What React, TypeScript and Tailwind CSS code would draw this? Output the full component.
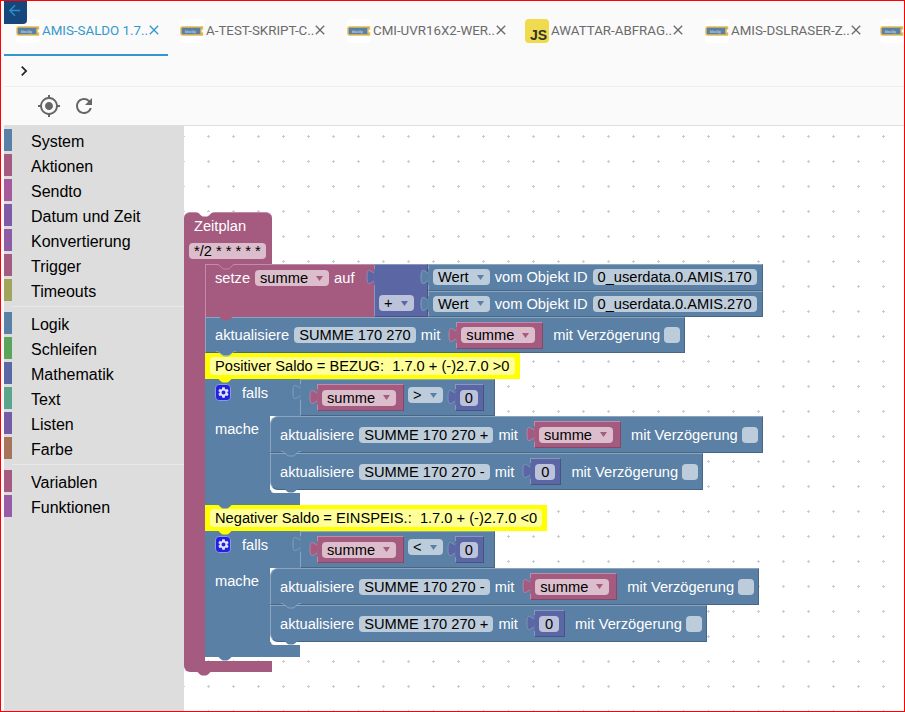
import type { ReactNode } from "react";
import { MdArrowBack, MdChevronRight, MdClose, MdGpsFixed, MdRefresh, MdSettings } from "react-icons/md";

const tones = {
  blue: { box: "bg-[#5b80a5] border-t-[#8ca6c0] border-l-[#8ca6c0] border-b-[#496684] border-r-[#496684]", hex: "#5b80a5", light: "#8ca6c0" },
  pink: { box: "bg-[#a55b80] border-t-[#c08ca6] border-l-[#c08ca6] border-b-[#844966] border-r-[#844966]", hex: "#a55b80", light: "#c08ca6" },
  math: { box: "bg-[#5b67a5] border-t-[#8c95c0] border-l-[#8c95c0] border-b-[#495284] border-r-[#495284]", hex: "#5b67a5", light: "#8c95c0" },
};
type Tone = keyof typeof tones;

const categories = [
  [["System", "bg-[#5b80a5]"], ["Aktionen", "bg-[#a55b80]"], ["Sendto", "bg-[#a55b99]"], ["Datum und Zeit", "bg-[#805ba5]"], ["Konvertierung", "bg-[#8e5ba5]"], ["Trigger", "bg-[#a55b80]"], ["Timeouts", "bg-[#a0a55b]"]],
  [["Logik", "bg-[#5b80a5]"], ["Schleifen", "bg-[#5ba55b]"], ["Mathematik", "bg-[#5b67a5]"], ["Text", "bg-[#5ba58c]"], ["Listen", "bg-[#745ba5]"], ["Farbe", "bg-[#a5745b]"]],
  [["Variablen", "bg-[#a55b80]"], ["Funktionen", "bg-[#995ba5]"]],
];

const tabs = [
  { label: "AMIS-SALDO 1.7..", width: "w-[164px]", active: true },
  { label: "A-TEST-SKRIPT-C..", width: "w-[167px]" },
  { label: "CMI-UVR16X2-WER..", width: "w-[178px]" },
  { label: "AWATTAR-ABFRAG..", width: "w-[180px]", js: true },
  { label: "AMIS-DSLRASER-Z..", width: "w-[175px]" },
];

function BlocklyIcon() {
  return (
    <span className="flex h-6 w-6 shrink-0 items-center justify-center rounded bg-white">
      <svg width="24" height="10" viewBox="0 0 24 10">
        <path d="M2.5 1h20v2h-1.5v4h1.5v2h-20c-1 0-1.5-1-1.5-1.5v-5c0-.5.5-1.5 1.5-1.5z" fill="#5b80a5" stroke="#e3bc55" strokeWidth="1.5" />
        <text x="5" y="6.5" fontSize="3.5" fill="#dfe6ee">blockly</text>
      </svg>
    </span>
  );
}

function Tab({ label, width, active, js }: { label: string; width: string; active?: boolean; js?: boolean }) {
  const color = active ? "text-[#3399cc]" : "text-[#6b6b6b]";
  return (
    <div className={`relative flex h-[55px] shrink-0 items-start pl-3 pt-[18px] ${width}`}>
      {js ? (
        <span className="flex h-6 w-6 shrink-0 items-end justify-end rounded bg-[#f0db4f] pr-[2px] text-[14px] font-bold leading-[15px] text-[#323330]">JS</span>
      ) : (
        <BlocklyIcon />
      )}
      <span className={`ml-[2px] whitespace-nowrap text-[13.33px] leading-6 [font-family:Roboto,sans-serif] ${color}`}>{label}</span>
      <MdClose className={`-ml-[2px] mt-[3px] shrink-0 ${color}`} size={16} />
      {active && <div className="absolute bottom-0 left-0 h-[2px] w-full bg-[#3399cc]" />}
    </div>
  );
}

function Notch({ color, stroke, left = 10 }: { color: string; stroke?: string; left?: number }) {
  return (
    <svg className="absolute top-full z-10 -mt-[1px]" style={{ left }} width="20" height="6" viewBox="0 0 20 6">
      <path d="M0 0c2 0 3 .5 4 1.5l1.5 1.5c.8.8 2 1.5 3 1.5h3c1 0 2.2-.7 3-1.5l1.5-1.5c1-1 2-1.5 4-1.5z" fill={color} />
      {stroke && <path d="M0 .5c2 0 3 .5 4 1.5l1.5 1.5c.8.8 2 1.5 3 1.5h3c1 0 2.2-.7 3-1.5l1.5-1.5c1-1 2-1.5 4-1.5" fill="none" stroke={stroke} strokeWidth="1" />}
    </svg>
  );
}

function PuzzleTab({ tone }: { tone: Tone }) {
  const t = tones[tone];
  return (
    <svg className="absolute -left-[9px] top-[4px] z-10" width="10" height="16" viewBox="0 0 10 16">
      <path d="M9 0.5c0 10-8-8-8 7.5s8-2.5 8 7.5z" fill={t.hex} stroke={t.light} strokeWidth="0.8" />
      <rect x="8.2" y="0" width="2" height="16" fill={t.hex} />
    </svg>
  );
}

function Field({ children, light = "blue", dropdown, className = "" }: { children: ReactNode; light?: Tone; dropdown?: boolean; className?: string }) {
  const bg = light === "pink" ? "bg-[#dbbdcc]" : light === "math" ? "bg-[#bdc2db]" : "bg-[#bdccdb]";
  return (
    <span className={`flex h-4 shrink-0 items-center whitespace-pre rounded-[4px] pl-[5px] text-[14.67px] leading-4 text-black ${dropdown ? "pr-[6px]" : "pr-[5px]"} ${bg} ${className}`}>
      {children}
      {dropdown && (
        <svg className="ml-2" width="7" height="5" viewBox="0 0 7 5">
          <path d="M0 0h7l-3.5 5z" fill={tones[light].hex} />
        </svg>
      )}
    </span>
  );
}

function Label({ children, className = "" }: { children: ReactNode; className?: string }) {
  return <span className={`block shrink-0 whitespace-nowrap text-[14.67px] leading-4 text-white ${className}`}>{children}</span>;
}

function VarBlock({ name }: { name: string }) {
  return (
    <div className={`relative flex h-[27px] shrink-0 items-center border pl-1 pr-[7px] ${tones.pink.box}`}>
      <PuzzleTab tone="pink" />
      <Field light="pink" dropdown>{name}</Field>
    </div>
  );
}

function NumBlock({ tight }: { tight?: boolean }) {
  return (
    <div className={`relative flex h-[27px] shrink-0 items-center border pl-1 pr-[5px] ${tones.math.box}`}>
      <PuzzleTab tone="math" />
      <Field light="math" className={tight ? "!pl-[5px] !pr-[5px]" : "!pl-[6px] !pr-[6px]"}>0</Field>
    </div>
  );
}

function Check() {
  return <span className="ml-1 h-4 w-4 shrink-0 rounded-[4px] bg-[#bdccdb]" />;
}

function Update({ name, value, height = "h-[37px]", inner, notch, round }: { name: string; value: ReactNode; height?: string; inner?: boolean; notch?: boolean; round?: boolean }) {
  return (
    <div className={`relative flex w-fit items-center border pl-[9px] pr-1 ${height} ${tones.blue.box} ${inner ? "rounded-tl-[8px]" : ""} ${round ? "rounded-bl-[8px]" : ""}`}>
      <Label>aktualisiere</Label>
      <Field className="ml-[5px]">{name}</Field>
      <Label className="ml-[5px]">mit</Label>
      <div className="ml-4">{value}</div>
      <Label className="ml-[10px]">mit Verzögerung</Label>
      <Check />
      {notch && <Notch color={tones.blue.hex} stroke={tones.blue.light} />}
      {round && <Notch color={tones.blue.hex} />}
    </div>
  );
}

function Comment({ text }: { text: string }) {
  return (
    <div className="relative flex h-[26px] w-fit items-center bg-[#ffff00] px-[5px]">
      <span className="flex h-[18px] items-center whitespace-pre rounded-[4px] bg-[#ffff99] px-[5px] text-[14.67px] leading-4 text-black">{text}</span>
      <Notch color="#ffff00" />
    </div>
  );
}

function IfBlock({ op, first, second }: { op: string; first: [string, ReactNode]; second: [string, ReactNode] }) {
  return (
    <div>
      <div className="flex h-[37px]">
        <div className="flex w-[95px] items-start bg-[#5b80a5] pl-[10px] pt-[5px]">
          <span className="flex h-[17px] w-4 items-center justify-center rounded-[4px] border border-[#8c95e8] bg-[#2222dd] text-[#dfe4ff]">
            <MdSettings size={13} />
          </span>
          <Label className="ml-[11px] mt-[1px]">falls</Label>
        </div>
        <div className={`relative flex w-[195px] items-center border pl-4 ${tones.blue.box}`}>
          <PuzzleTab tone="blue" />
          <VarBlock name="summe" />
          <Field dropdown className="-mt-[5px] ml-1">{op}</Field>
          <div className="ml-3"><NumBlock tight /></div>
        </div>
      </div>
      <div className="flex">
        <div className="w-[65px] bg-[#5b80a5] pl-[10px] pt-[5px]">
          <Label>mache</Label>
        </div>
        <div>
          <Update name={first[0]} value={first[1]} inner notch />
          <Update name={second[0]} value={second[1]} round />
        </div>
      </div>
      <div className="relative h-[15px] w-[95px] bg-[#5b80a5]">
        <div className="absolute left-[66px] top-0 h-[3px] w-[29px] rounded-bl-[6px] bg-white" />
        <Notch color={tones.blue.hex} />
      </div>
    </div>
  );
}

function GridDots() {
  return (
    <svg className="absolute inset-0 h-full w-full">
      <defs>
        <pattern id="grid" x="12" y="-2" width="25" height="25" patternUnits="userSpaceOnUse">
          <path d="M11 12.5h3M12.5 11v3" stroke="#cccccc" strokeWidth="1" />
        </pattern>
      </defs>
      <rect width="100%" height="100%" fill="url(#grid)" />
    </svg>
  );
}

function Schedule() {
  return (
    <div className="absolute left-0 top-[86px]">
      <div className={`relative flex h-[52px] w-[88px] flex-col items-start rounded-t-[6px] border-t pl-[10px] pt-[5px] ${tones.pink.box}`}>
        <div className="absolute left-0 top-0 h-0 w-full">
          <Notch color="#ffffff" left={11} />
        </div>
        <Label>Zeitplan</Label>
        <Field light="pink" className="-ml-[5px] mt-[9px] w-[77px]">*/2 * * * * *</Field>
      </div>
      <div className="flex">
        <div className="w-[21px] bg-[#a55b80]" />
        <div className="pb-1">
          <div className="flex">
            <div className={`relative flex h-[53px] w-[169px] items-start border-l border-t pl-[9px] pt-[5px] ${tones.pink.box}`}>
              <div className="absolute left-0 top-0 h-0 w-full">
                <Notch color={tones.pink.hex} stroke={tones.pink.light} />
              </div>
              <Label>setze</Label>
              <Field light="pink" dropdown className="ml-[5px]">summe</Field>
              <Label className="ml-[5px]">auf</Label>
              <Notch color={tones.pink.hex} />
            </div>
            <div className={`relative flex h-[53px] w-[54px] items-end border pb-[5px] pl-1 ${tones.math.box}`}>
              <PuzzleTab tone="math" />
              <Field dropdown light="math">+</Field>
            </div>
            <div>
              {["0_userdata.0.AMIS.170", "0_userdata.0.AMIS.270"].map((id) => (
                <div key={id} className={`relative flex h-[26.5px] w-[335px] items-center border pl-1 ${tones.blue.box}`}>
                  <PuzzleTab tone="blue" />
                  <Field dropdown>Wert</Field>
                  <Label className="ml-[5px]">vom Objekt ID</Label>
                  <Field className="ml-[5px]">{id}</Field>
                </div>
              ))}
            </div>
          </div>
          <Update name="SUMME 170 270" value={<VarBlock name="summe" />} height="h-[36px]" notch />
          <Comment text="Positiver Saldo = BEZUG:  1.7.0 + (-)2.7.0 >0" />
          <IfBlock
            op=">"
            first={["SUMME 170 270 +", <VarBlock name="summe" />]}
            second={["SUMME 170 270 -", <NumBlock />]}
          />
          <Comment text="Negativer Saldo = EINSPEIS.:  1.7.0 + (-)2.7.0 <0" />
          <IfBlock
            op="<"
            first={["SUMME 170 270 -", <VarBlock name="summe" />]}
            second={["SUMME 170 270 +", <NumBlock />]}
          />
        </div>
      </div>
      <div className="relative h-[11px] w-[88px] rounded-bl-[6px] bg-[#a55b80]">
        <Notch color={tones.pink.hex} />
      </div>
    </div>
  );
}

export default function App() {
  return (
    <div className="relative flex h-[712px] w-[905px] flex-col overflow-hidden border border-[#ff0000] bg-[#fafafa] pl-[3px] [font-family:'Liberation_Sans',Arial,sans-serif]">
      <div className="absolute left-[3px] top-0 z-20 flex h-[23px] w-[23px] items-start rounded-br-[4px] bg-[#16477c] pl-[2px] pt-[1px] text-[#2e8fcb]">
        <MdArrowBack size={17} />
      </div>
      <div className="flex shrink-0 overflow-hidden">
        {tabs.map((t) => (
          <Tab key={t.label} {...t} />
        ))}
        <div className="shrink-0 pl-3 pt-[18px]">
          <BlocklyIcon />
        </div>
      </div>
      <div className="flex h-[31px] shrink-0 items-center border-b border-[#eeeeee] pl-[10px] text-[#222222]">
        <MdChevronRight size={20} />
      </div>
      <div className="flex h-[39px] shrink-0 items-center gap-[11px] border-b border-[#dddddd] pl-[33px] text-[#666666]">
        <MdGpsFixed size={24} />
        <MdRefresh size={24} />
      </div>
      <div className="flex min-h-0 flex-1">
        <nav className="flex w-[180px] shrink-0 flex-col bg-[#dddddd] pt-[3px]">
          {categories.map((group, i) => (
            <div key={i} className="flex flex-col">
              {i > 0 && <div className="mb-[5px] ml-2 mt-[2px] h-px bg-[#e8e8e8]" />}
              {group.map(([name, color]) => (
                <div key={name} className="mb-[3px] flex h-[22px] items-center">
                  <span className={`h-[22px] w-2 shrink-0 ${color}`} />
                  <span className="ml-[19px] mt-[4px] text-[16px] leading-5 text-black">{name}</span>
                </div>
              ))}
            </div>
          ))}
        </nav>
        <main className="relative flex-1 overflow-hidden bg-white">
          <GridDots />
          <Schedule />
        </main>
      </div>
    </div>
  );
}
